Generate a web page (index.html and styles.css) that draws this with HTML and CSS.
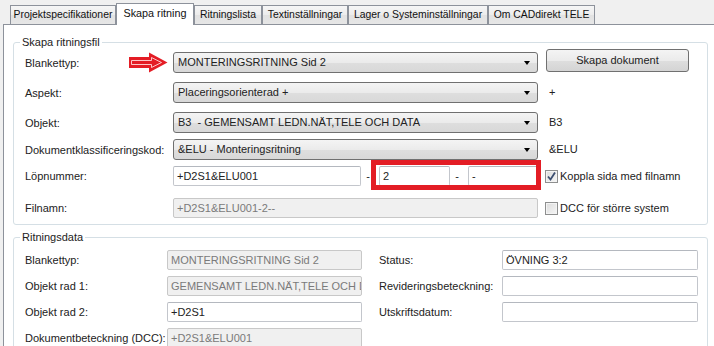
FILE: index.html
```html
<!DOCTYPE html>
<html lang="sv">
<head>
<meta charset="utf-8">
<title>Skapa ritning</title>
<link rel="stylesheet" href="styles.css">
</head>
<body>
<div class="tabstrip">
  <div class="tab t1">Projektspecifikationer</div>
  <div class="tab sel t2">Skapa ritning</div>
  <div class="tab t3">Ritningslista</div>
  <div class="tab t4">Textinställningar</div>
  <div class="tab t5">Lager o Systeminställningar</div>
  <div class="tab t6">Om CADdirekt TELE</div>
</div>
<div class="page">
  <div class="group g1">
    <div class="legend">Skapa ritningsfil</div>

    <div class="row h30 annot">
      <div class="lbl lc">Blankettyp:</div>
      <div class="combo">MONTERINGSRITNING Sid 2</div>
      <div class="btn">Skapa dokument</div>
      <svg class="arrow" width="41" height="21" viewBox="0 0 41 21">
        <polygon points="1,5 21,5 21,0.5 39.5,10.5 21,20.5 21,16 1,16" fill="#e41d25"/>
        <polygon points="3.5,8.5 23.5,8.5 23.5,5.5 33.5,10.5 23.5,15.5 23.5,12.5 3.5,12.5" fill="none" stroke="#ffd9da" stroke-width="0.9"/>
      </svg>
    </div>

    <div class="row h30">
      <div class="lbl lc">Aspekt:</div>
      <div class="combo">Placeringsorienterad +</div>
      <div class="side">+</div>
    </div>

    <div class="row h27">
      <div class="lbl lc">Objekt:</div>
      <div class="combo">B3&nbsp; - GEMENSAMT LEDN.NÄT,TELE OCH DATA</div>
      <div class="side">B3</div>
    </div>

    <div class="row h27">
      <div class="lbl lc">Dokumentklassificeringskod:</div>
      <div class="combo">&amp;ELU - Monteringsritning</div>
      <div class="side">&amp;ELU</div>
    </div>

    <div class="row h32 annot">
      <div class="lbl lt">Löpnummer:</div>
      <div class="tb w188">+D2S1&amp;ELU001</div>
      <div class="sep">-</div>
      <div class="tb w71">2</div>
      <div class="sep">-</div>
      <div class="tb w70">-</div>
      <div class="check">
        <span class="box"><svg width="11" height="11" viewBox="0 0 11 11"><path d="M2 5.5 L4.5 8.5 L9 1.5" fill="none" stroke="#3c4e70" stroke-width="1.8"/></svg></span>
        <span class="ctext">Koppla sida med filnamn</span>
      </div>
      <div class="redbox"></div>
    </div>

    <div class="row h20">
      <div class="lbl lt">Filnamn:</div>
      <div class="tb dis w365">+D2S1&amp;ELU001-2--</div>
      <div class="check">
        <span class="box"></span>
        <span class="ctext">DCC för större system</span>
      </div>
    </div>
  </div>

  <div class="group g2">
    <div class="legend">Ritningsdata</div>

    <div class="row h26">
      <div class="lbl lt l2a">Blankettyp:</div>
      <div class="tb dis w195">MONTERINGSRITNING Sid 2</div>
      <div class="lbl lt l2b">Status:</div>
      <div class="tb w196">ÖVNING 3:2</div>
    </div>
    <div class="row h26">
      <div class="lbl lt l2a">Objekt rad 1:</div>
      <div class="tb dis w195">GEMENSAMT LEDN.NÄT,TELE OCH DATA</div>
      <div class="lbl lt l2b">Revideringsbeteckning:</div>
      <div class="tb w196"></div>
    </div>
    <div class="row h26">
      <div class="lbl lt l2a">Objekt rad 2:</div>
      <div class="tb w195">+D2S1</div>
      <div class="lbl lt l2b">Utskriftsdatum:</div>
      <div class="tb w196"></div>
    </div>
    <div class="row h26">
      <div class="lbl lt l2a">Dokumentbeteckning (DCC):</div>
      <div class="tb dis w195">+D2S1&amp;ELU001</div>
    </div>
  </div>
</div>
</body>
</html>
```

FILE: styles.css
```css
html, body {
  margin: 0;
  padding: 0;
  width: 714px;
  height: 346px;
  overflow: hidden;
  background: #f0f0f0;
  font-family: "Liberation Sans", Arial, sans-serif;
  font-size: 11px;
  color: #222;
}

/* ---------- tabs ---------- */
.tabstrip {
  display: flex;
  align-items: flex-end;
  height: 24px;
  padding-left: 10px;
}
.tab {
  box-sizing: border-box;
  height: 19px;
  border: 1px solid #8d929b;
  border-bottom: none;
  text-align: center;
  line-height: 18px;
  font-size: 10.4px;
  white-space: nowrap;
  overflow: hidden;
  background: linear-gradient(#f6f6f6, #ececec 50%, #e2e2e2 52%, #e6e6e6);
  color: #111;
}
.tab.sel {
  height: 22px;
  margin-bottom: -1px;
  background: #fff;
  line-height: 19px;
  font-size: 10.8px;
  z-index: 1;
}
.t1 { width: 106px; }
.t2 { width: 78px; }
.t3 { width: 68px; }
.t4 { width: 86px; }
.t5 { width: 140px; }
.t6 { width: 107px; }

/* ---------- page ---------- */
.page {
  margin-left: 3px;
  border-left: 1px solid #8d929b;
  border-top: 1px solid #8d929b;
  background: #fff;
  padding: 17px 6px 0 9px;
  height: 304px;
  overflow: hidden;
}

.group {
  position: relative;
  border: 1px solid #d5dfe5;
  border-radius: 3px;
}
.g1 { padding: 9px 0 6px 11px; }
.g2 { margin-top: 12px; padding: 12px 0 0 11px; height: 200px; }

.legend {
  position: absolute;
  top: -7px;
  left: 6px;
  padding: 0 2px;
  background: #fff;
  line-height: 13px;
}

/* ---------- rows ---------- */
.row {
  display: flex;
  align-items: flex-start;
}
.annot { position: relative; }
.h30 { height: 30px; }
.h27 { height: 27px; }
.h32 { height: 32px; }
.h20 { height: 20px; }
.h26 { height: 26px; }

.lbl { white-space: nowrap; flex: none; }
.lc { width: 148px; line-height: 22px; }
.lt { width: 148px; line-height: 21px; }
.l2a { width: 142px; }
.l2b { width: 123px; margin-left: 17px; }

.combo {
  position: relative;
  box-sizing: border-box;
  flex: none;
  width: 365px;
  height: 21px;
  border: 1px solid #707070;
  border-radius: 3px;
  background: linear-gradient(#f4f4f4, #ebebeb 50%, #dedede 52%, #d8d8d8);
  padding-left: 4px;
  line-height: 19px;
  white-space: nowrap;
  overflow: hidden;
}
.combo::after {
  content: "";
  position: absolute;
  right: 7px;
  top: 8px;
  border-top: 4px solid #000;
  border-left: 3.5px solid transparent;
  border-right: 3.5px solid transparent;
}

.btn {
  box-sizing: border-box;
  flex: none;
  width: 143px;
  height: 23px;
  margin: -3px 0 0 8px;
  border: 1px solid #707070;
  border-radius: 3px;
  background: linear-gradient(#f4f4f4, #ebebeb 50%, #dedede 52%, #d4d4d4);
  text-align: center;
  line-height: 21px;
}

.side {
  margin-left: 11px;
  line-height: 21px;
}

.tb {
  box-sizing: border-box;
  flex: none;
  height: 20px;
  border: 1px solid #c3c6cc;
  border-top-color: #b4b8bf;
  border-radius: 2px;
  background: #fff;
  padding-left: 3px;
  line-height: 18px;
  white-space: nowrap;
  overflow: hidden;
}
.tb.dis {
  background: #f0f0f0;
  color: #7a7a7a;
  border-color: #c8c8c8;
}
.w188 { width: 188px; }
.w71 { width: 71px; }
.w70 { width: 70px; }
.w365 { width: 365px; }
.w195 { width: 195px; }
.w196 { width: 196px; }

.sep {
  flex: none;
  width: 14px;
  margin-right: 4px;
  text-align: center;
  line-height: 20px;
}

.check {
  display: flex;
  align-items: center;
  height: 20px;
  margin-left: 7px;
  white-space: nowrap;
}
.box {
  box-sizing: border-box;
  display: flex;
  align-items: center;
  justify-content: center;
  width: 13px;
  height: 13px;
  border: 1px solid #8e8f8f;
  background: linear-gradient(135deg, #dcdcdc, #f6f6f6);
  box-shadow: inset 0 0 0 1px #f4f4f4;
}
.ctext { margin-left: 2px; }

/* annotations drawn over the form */
.arrow {
  position: absolute;
  left: 103px;
  top: 0;
}
.redbox {
  position: absolute;
  left: 346px;
  top: -6px;
  width: 170px;
  height: 30px;
  box-sizing: border-box;
  border: 5px solid #e31d25;
}
```
